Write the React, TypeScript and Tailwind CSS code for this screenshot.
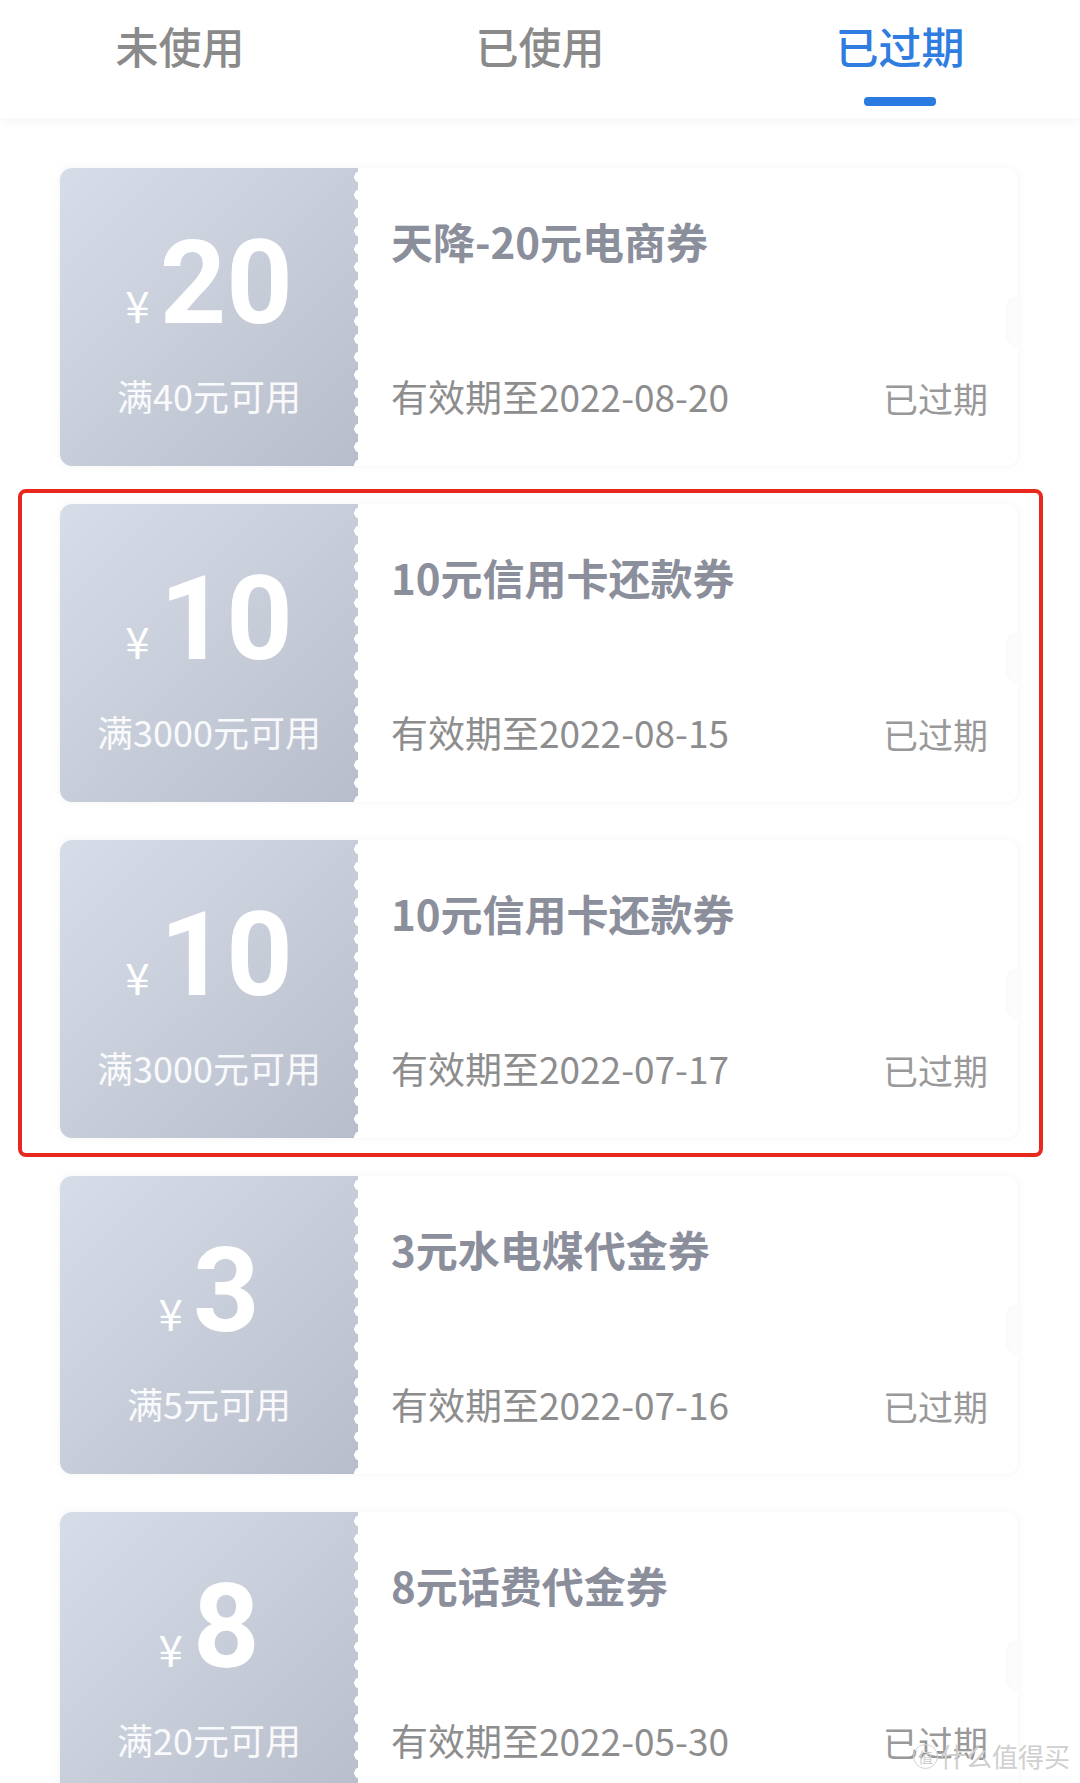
import React from "react";

type Coupon = {
  amount: string;
  cond: string;
  title: string;
  date: string;
};

const coupons: Coupon[] = [
  { amount: "20", cond: "满40元可用", title: "天降-20元电商券", date: "有效期至2022-08-20" },
  { amount: "10", cond: "满3000元可用", title: "10元信用卡还款券", date: "有效期至2022-08-15" },
  { amount: "10", cond: "满3000元可用", title: "10元信用卡还款券", date: "有效期至2022-07-17" },
  { amount: "3", cond: "满5元可用", title: "3元水电煤代金券", date: "有效期至2022-07-16" },
  { amount: "8", cond: "满20元可用", title: "8元话费代金券", date: "有效期至2022-05-30" },
];

const CouponCard = ({ c }: { c: Coupon }) => {
  return (
    <div className="relative flex h-[298px] shrink-0 rounded-xl bg-white shadow-[0_0_10px_rgba(0,0,0,0.05)]">
      <div className="relative flex w-[298px] flex-col items-center rounded-l-xl bg-gradient-to-br from-[#d7dde8] to-[#b8bdcb]">
        <div className="mt-[58px] flex h-[114px] items-baseline text-white">
          <span className="mr-[10px] font-['Noto_Sans_CJK_SC',sans-serif] text-[44px] leading-none">¥</span>
          <span className="font-['Roboto',sans-serif] text-[116px] font-bold leading-[114px]">{c.amount}</span>
        </div>
        <div className="mt-[37px] font-['Noto_Sans_CJK_SC',sans-serif] text-[36px] leading-[36px] text-white/90">
          {c.cond}
        </div>
        <div className="absolute right-[-2px] top-0 h-full w-[7px] bg-[radial-gradient(circle_at_100%_50%,#ffffff_5.5px,transparent_6px)] bg-[length:7px_18px]" />
      </div>
      <div className="flex flex-1 flex-col pl-[33px] pr-[30px] pt-[52px] pb-[50px] font-['Noto_Sans_CJK_SC',sans-serif]">
        <div className="text-[42px] font-bold leading-[42px] text-[#8b8e9b]">{c.title}</div>
        <div className="mt-auto flex items-center justify-between">
          <span className="text-[37px] leading-[36px] text-[#8d8d8d]">{c.date}</span>
          <span className="mt-[4px] text-[35px] leading-[36px] text-[#999999]">已过期</span>
        </div>
      </div>
      <div className="absolute right-0 top-[128px] h-[52px] w-[12px] rounded-l-full bg-[#fcfcfc] shadow-[inset_2px_0_3px_rgba(0,0,0,0.015)]" />
    </div>
  );
};

export default function App() {
  const tabs = ["未使用", "已使用", "已过期"];
  return (
    <div className="relative h-[1783px] w-[1080px] overflow-hidden bg-white font-['Noto_Sans_CJK_SC',sans-serif]">
      <div className="relative z-10 grid h-[118px] grid-cols-3 bg-white shadow-[0_4px_10px_rgba(0,0,0,0.04)]">
        {tabs.map((t, i) => (
          <div key={t} className="flex flex-col items-center pt-[24px]">
            <span
              className={
                i === 2
                  ? "text-[43px] font-medium leading-[42px] text-[#2f7de1]"
                  : "text-[43px] font-medium leading-[42px] text-[#8a8a8a]"
              }
            >
              {t}
            </span>
            {i === 2 && <div className="mt-[31px] h-[9px] w-[72px] rounded-sm bg-[#2a7ae2]" />}
          </div>
        ))}
      </div>

      <div className="relative flex flex-col gap-[38px] pl-[60px] pr-[62px] pt-[50px]">
        {coupons.map((c, i) => (
          <CouponCard key={i} c={c} />
        ))}
        <div className="pointer-events-none absolute left-[18px] top-[371px] h-[668px] w-[1025px] rounded-[8px] border-[4px] border-[#e8281e]" />
      </div>

      <div className="absolute bottom-[14px] right-[10px] flex items-center gap-[2px] text-[#cfcfcf]">
        <span className="flex h-[25px] w-[25px] items-center justify-center rounded-full border border-[#d4d4d4] text-[15px] leading-none">值</span>
        <span className="text-[26px] leading-[26px]">什么值得买</span>
      </div>
    </div>
  );
}
